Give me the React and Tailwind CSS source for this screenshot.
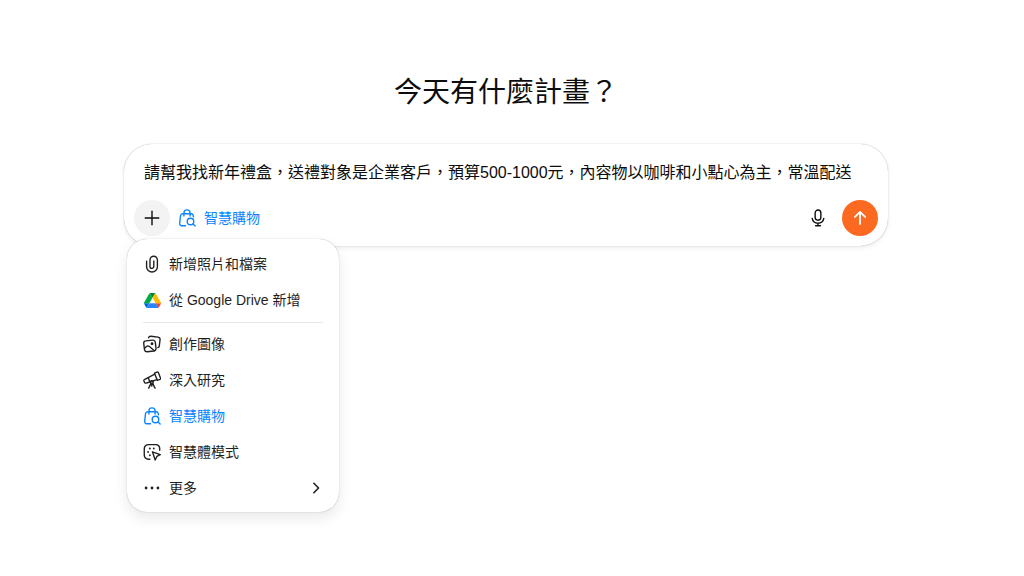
import React, { useState } from "react";

function Icon({ children, className = "size-[18px]" }) {
  return (
    <svg
      viewBox="0.5 0.5 17 17"
      className={`shrink-0 ${className}`}
      fill="none"
      stroke="currentColor"
      strokeWidth="1.3"
      strokeLinecap="round"
      strokeLinejoin="round"
      aria-hidden="true"
    >
      {children}
    </svg>
  );
}

const PlusIcon = () => (
  <Icon>
    <path d="M9 2.6v12.8M2.6 9h12.8" />
  </Icon>
);

const BagIcon = () => (
  <Icon>
    <path d="M7.6 16.3H4.1c-1.3 0-2.2-1.1-2-2.4l.8-7.1c.1-1 .9-1.8 2-1.8h8c1 0 1.8.7 2 1.7l.2 1.2" />
    <path d="M6.1 7.2V4.2a2.9 2.9 0 0 1 5.8 0v3" />
    <circle cx="12.3" cy="12.3" r="3.1" />
    <path d="m14.7 14.6 2 1.9" />
  </Icon>
);

const ClipIcon = () => (
  <Icon>
    <path d="M3.9 6.3v5.2a5.1 5.1 0 0 0 10.2 0V5.2a3.5 3.5 0 0 0-7 0v6.1a1.8 1.8 0 0 0 3.6 0V6.2" />
  </Icon>
);

const DriveIcon = () => (
  <svg viewBox="0 0 87.3 78" className="size-[17px] shrink-0" aria-hidden="true">
    <path d="m6.6 66.85 3.85 6.65c.8 1.4 1.95 2.5 3.3 3.3l13.75-23.8H0c0 1.55.4 3.1 1.2 4.5z" fill="#0066da" />
    <path d="M43.65 25 29.9 1.2c-1.35.8-2.5 1.9-3.3 3.3l-25.4 44A9.06 9.06 0 0 0 0 53h27.5z" fill="#00ac47" />
    <path d="M73.55 76.8c1.35-.8 2.5-1.9 3.3-3.3l1.6-2.75L86.1 57.5c.8-1.4 1.2-2.95 1.2-4.5H59.8l5.85 11.5z" fill="#ea4335" />
    <path d="M43.65 25 57.4 1.2C56.05.4 54.5 0 52.9 0H34.4c-1.6 0-3.15.45-4.5 1.2z" fill="#00832d" />
    <path d="M59.8 53H27.5L13.75 76.8c1.35.8 2.9 1.2 4.5 1.2h50.8c1.6 0 3.15-.45 4.5-1.2z" fill="#2684fc" />
    <path d="m73.4 26.5-12.7-22c-.8-1.4-1.95-2.5-3.3-3.3L43.65 25 59.8 53h27.45c0-1.55-.4-3.1-1.2-4.5z" fill="#ffba00" />
  </svg>
);

const ImagesIcon = () => (
  <Icon>
    <path d="m3.2 6 6.5-.7c1.3-.1 2.2.6 2.4 1.9l.7 6c.1 1.3-.6 2.2-1.9 2.4l-6.6.7c-1.3.1-2.2-.6-2.4-1.9L1.2 8.4C1.1 7.1 1.9 6.1 3.2 6Z" />
    <path d="M5.7 3.1c.4-1 1.2-1.5 2.3-1.4l6.7.8c1.3.2 2.1 1.1 1.9 2.4l-.7 5.8c-.1.9-.6 1.5-1.3 1.8" />
    <path d="m2 13 1.8-1.7c.8-.7 1.7-.7 2.5-.1l5 4.1" />
    <circle cx="9" cy="8.8" r=".7" fill="currentColor" />
  </Icon>
);

const TelescopeIcon = () => (
  <Icon>
    <path d="m11.3 2.5 2.4-1c.6-.2 1.1 0 1.3.5l2 5.2c.2.6 0 1-.5 1.2l-2.5.9Z" />
    <path d="m11.6 3.5-6.2 3.2 1.5 4.2 6.7-2.2" />
    <path d="m5.5 6.8-3.4 1.7c-.7.3-.9.9-.7 1.5l.5 1.2c.2.6.8.9 1.5.7l3.6-1" />
    <circle cx="8.8" cy="11" r="1.4" />
    <path d="M8 12.2 5.9 16.7M9.6 12.2l2.3 4.5M8.8 12.4v2.4" />
  </Icon>
);

const AgentIcon = () => (
  <Icon>
    <path d="M7 15.8H5.7c-2.3 0-4-1.7-4-4V6c0-2.3 1.7-4 4-4h6.6c2.3 0 4 1.7 4 4v1.4" />
    <path d="m9.4 8.8 7.4 2.7-3.2 1.7-1.6 3.4Z" />
    <g fill="currentColor" stroke="none">
      <circle cx="7" cy="5.7" r=".9" />
      <circle cx="10.7" cy="5.7" r=".9" />
      <circle cx="5.3" cy="8.9" r=".9" />
      <circle cx="7" cy="12" r=".9" />
    </g>
  </Icon>
);

const MoreIcon = () => (
  <Icon>
    <g fill="currentColor" stroke="none">
      <circle cx="3.4" cy="9" r="1.3" />
      <circle cx="9" cy="9" r="1.3" />
      <circle cx="14.6" cy="9" r="1.3" />
    </g>
  </Icon>
);

const MicIcon = () => (
  <Icon>
    <rect x="6.3" y="1.5" width="5.4" height="9.6" rx="2.7" />
    <path d="M3.5 9.4a5.6 5.6 0 0 0 11 0M9 13.9v2.4M6.7 16.3h4.6" />
  </Icon>
);

const ArrowUpIcon = () => (
  <Icon>
    <path d="M9 14.7V3.3M4.2 8 9 3.2 13.8 8" strokeWidth="1.7" />
  </Icon>
);

const ChevronIcon = () => (
  <Icon className="ml-auto size-[18px]">
    <path d="m7 4.5 4.4 4.5L7 13.5" strokeWidth="1.5" />
  </Icon>
);

function MenuItem({ icon, label, active = false, children }) {
  return (
    <button
      type="button"
      role="menuitem"
      className={`flex h-9 w-full items-center gap-2 pr-3.5 pl-4 text-left text-sm ${
        active ? "text-[#0a84ff]" : "text-[#1f1f1f]"
      }`}
    >
      <span className="flex size-[18px] shrink-0 items-center justify-center">{icon}</span>
      <span>{label}</span>
      {children}
    </button>
  );
}

function AttachMenu() {
  return (
    <div
      role="menu"
      aria-label="新增"
      className="absolute top-full left-[3px] z-10 -mt-[7px] w-[212px] rounded-[20px] bg-white pt-[7px] pb-1.5 shadow-[0_0_1px_rgba(0,0,0,0.4),0_6px_14px_rgba(0,0,0,0.09)]"
    >
      <MenuItem icon={<ClipIcon />} label="新增照片和檔案" />
      <MenuItem icon={<DriveIcon />} label="從 Google Drive 新增" />
      <hr className="mx-4 mt-1 mb-[3px] border-[#e8e8e8]" />
      <MenuItem icon={<ImagesIcon />} label="創作圖像" />
      <MenuItem icon={<TelescopeIcon />} label="深入研究" />
      <MenuItem icon={<BagIcon />} label="智慧購物" active />
      <MenuItem icon={<AgentIcon />} label="智慧體模式" />
      <MenuItem icon={<MoreIcon />} label="更多">
        <ChevronIcon />
      </MenuItem>
    </div>
  );
}

export default function App() {
  const [prompt, setPrompt] = useState(
    "請幫我找新年禮盒，送禮對象是企業客戶，預算500-1000元，內容物以咖啡和小點心為主，常溫配送"
  );

  return (
    <main
      lang="zh-Hant"
      className="flex min-h-screen flex-col items-center bg-white pt-[73px] pr-3 font-['Liberation_Sans','Noto_Sans_CJK_TC',sans-serif] text-[#0d0d0d]"
    >
      <h1 className="text-[28px] leading-10">今天有什麼計畫？</h1>
      <form
        onSubmit={(event) => event.preventDefault()}
        className="relative mt-[31px] w-full max-w-[764px] rounded-[28px] bg-white px-2.5 pt-[17px] pb-2.5 shadow-[0_0_1px_rgba(0,0,0,0.4),0_2px_5px_rgba(0,0,0,0.07)]"
      >
        <input
          type="text"
          aria-label="訊息"
          value={prompt}
          onChange={(event) => setPrompt(event.target.value)}
          className="block h-6 w-full px-2.5 text-base outline-none"
        />
        <div className="mt-[15px] flex items-center">
          <button
            type="button"
            aria-label="新增"
            aria-expanded="true"
            className="flex size-9 items-center justify-center rounded-full bg-[#f3f3f3]"
          >
            <PlusIcon />
          </button>
          <button type="button" className="ml-2 flex h-9 items-center gap-2 text-sm text-[#0a84ff]">
            <BagIcon />
            智慧購物
          </button>
          <button type="button" aria-label="語音輸入" className="ml-auto flex size-9 items-center justify-center">
            <MicIcon />
          </button>
          <button
            type="submit"
            aria-label="傳送"
            className="ml-1.5 flex size-9 items-center justify-center rounded-full bg-[#fc6a22] text-white"
          >
            <ArrowUpIcon />
          </button>
        </div>
        <AttachMenu />
      </form>
    </main>
  );
}
